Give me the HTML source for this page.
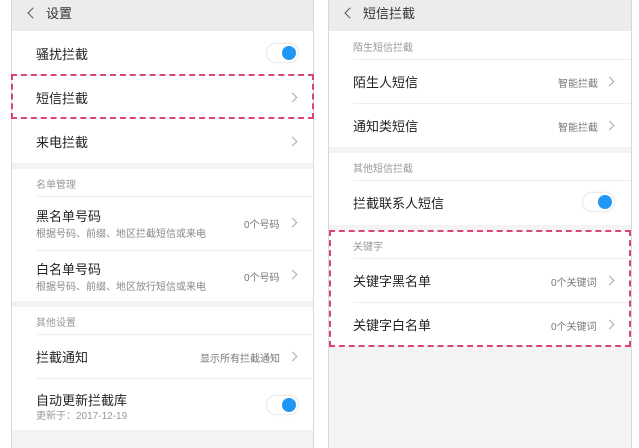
<!DOCTYPE html><html><head><meta charset="utf-8"><style>
*{margin:0;padding:0;box-sizing:border-box}
body{width:639px;height:448px;background:#fff;position:relative;overflow:hidden;font-family:"Liberation Sans","Noto Sans CJK SC",sans-serif;color:#222}
.ph{position:absolute;top:0;height:448px;background:#f3f3f4;border-left:1px solid #d8d8d8;border-right:1px solid #d8d8d8}
.hd{position:absolute;left:0;right:0;top:0;height:31px;background:#ececee}
.hd span{position:absolute;top:3px;font-size:13px;color:#333}
.bk{position:absolute;left:17px;top:9px;width:8px;height:8px;border-left:1px solid #555;border-bottom:1px solid #555;transform:rotate(45deg)}
.w{position:absolute;left:0;right:0;background:#fff}
.t{position:absolute;font-size:13px;color:#222;white-space:nowrap}
.s{position:absolute;font-size:10px;color:#999;white-space:nowrap}
.v{position:absolute;font-size:10px;color:#777;white-space:nowrap;text-align:right}
.ln{position:absolute;height:1px;background:#eee;right:0}
.ch{position:absolute;width:7px;height:7px;border-right:1px solid #aaa;border-top:1px solid #aaa;transform:rotate(45deg)}
.tg{position:absolute;width:31px;height:18px;border-radius:9px;background:#fff;box-shadow:0 0 2px rgba(0,0,0,.25)}
.tg:after{content:"";position:absolute;right:2px;top:2px;width:14px;height:14px;border-radius:7px;background:#2196f3}
.dash{position:absolute;border:2px dashed #d9457a}
</style></head><body>
<div class="ph" style="left:11px;width:303px">
 <div class="hd"><i class="bk"></i><span style="left:34px">设置</span></div>
 <div class="w" style="top:31px;height:132px"></div>
 <div class="t" style="left:24px;top:44px">骚扰拦截</div><div class="tg" style="left:255px;top:44px"></div>
 <div class="t" style="left:24px;top:88px">短信拦截</div><div class="ch" style="left:277px;top:94px"></div>
 <div class="t" style="left:24px;top:132px">来电拦截</div><div class="ch" style="left:277px;top:138px"></div>
 <div class="w" style="top:169px;height:132px"></div>
 <div class="s" style="left:24px;top:176px">名单管理</div><div class="ln" style="left:24px;top:196px"></div>
 <div class="t" style="left:24px;top:206px">黑名单号码</div><div class="s" style="left:24px;top:225px;color:#888">根据号码、前缀、地区拦截短信或来电</div>
 <div class="v" style="left:232px;top:216px">0个号码</div><div class="ch" style="left:277px;top:219px"></div>
 <div class="ln" style="left:24px;top:250px"></div>
 <div class="t" style="left:24px;top:259px">白名单号码</div><div class="s" style="left:24px;top:278px;color:#888">根据号码、前缀、地区放行短信或来电</div>
 <div class="v" style="left:232px;top:269px">0个号码</div><div class="ch" style="left:277px;top:271px"></div>
 <div class="w" style="top:307px;height:123px"></div>
 <div class="s" style="left:24px;top:314px">其他设置</div><div class="ln" style="left:24px;top:334px"></div>
 <div class="t" style="left:24px;top:347px">拦截通知</div><div class="v" style="left:188px;top:350px">显示所有拦截通知</div><div class="ch" style="left:277px;top:353px"></div>
 <div class="ln" style="left:24px;top:378px"></div>
 <div class="t" style="left:24px;top:390px">自动更新拦截库</div><div class="s" style="left:24px;top:407px">更新于：2017-12-19</div>
 <div class="tg" style="left:255px;top:396px"></div>
</div>
<div class="dash" style="left:11px;top:74px;width:303px;height:45px"></div>
<div class="ph" style="left:328px;width:304px">
 <div class="hd"><i class="bk"></i><span style="left:34px">短信拦截</span></div>
 <div class="w" style="top:31px;height:116px"></div>
 <div class="s" style="left:24px;top:39px">陌生短信拦截</div><div class="ln" style="left:24px;top:59px"></div>
 <div class="t" style="left:24px;top:72px">陌生人短信</div><div class="v" style="left:229px;top:75px">智能拦截</div><div class="ch" style="left:277px;top:78px"></div>
 <div class="ln" style="left:24px;top:103px"></div>
 <div class="t" style="left:24px;top:116px">通知类短信</div><div class="v" style="left:229px;top:119px">智能拦截</div><div class="ch" style="left:277px;top:122px"></div>
 <div class="w" style="top:153px;height:72px"></div>
 <div class="s" style="left:24px;top:160px">其他短信拦截</div><div class="ln" style="left:24px;top:180px"></div>
 <div class="t" style="left:24px;top:193px">拦截联系人短信</div><div class="tg" style="left:254px;top:193px"></div>
 <div class="w" style="top:231px;height:115px"></div>
 <div class="s" style="left:24px;top:238px">关键字</div><div class="ln" style="left:24px;top:258px"></div>
 <div class="t" style="left:24px;top:271px">关键字黑名单</div><div class="v" style="left:222px;top:274px">0个关键词</div><div class="ch" style="left:277px;top:277px"></div>
 <div class="ln" style="left:24px;top:302px"></div>
 <div class="t" style="left:24px;top:315px">关键字白名单</div><div class="v" style="left:222px;top:318px">0个关键词</div><div class="ch" style="left:277px;top:321px"></div>
</div>
<div class="dash" style="left:329px;top:230px;width:302px;height:117px"></div>
</body></html>
